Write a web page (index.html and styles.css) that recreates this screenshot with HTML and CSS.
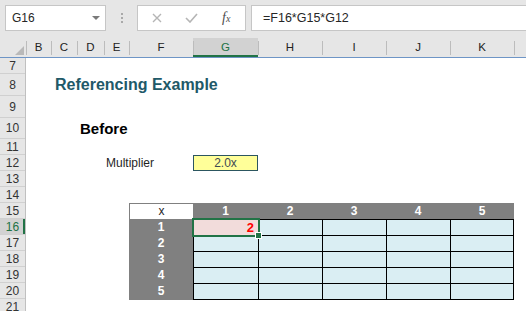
FILE: index.html
```html
<!DOCTYPE html>
<html lang="en">
<head>
    <meta charset="UTF-8">
    <title>Referencing Example</title>
    <link rel="stylesheet" href="styles.css">
</head>
<body>
    <div class="toolbar">
        <div class="namebox">
            <span>G16</span>
            <span class="caret"></span>
        </div>
        <div class="dots"><i></i><i></i><i></i></div>
        <div class="fxbtns">
            <svg class="ico-x" width="10" height="10" viewBox="0 0 10 10">
                <path d="M1 1 L9 9 M9 1 L1 9" stroke="#b5b5b5" stroke-width="1.4" fill="none"/>
            </svg>
            <svg class="ico-ok" width="13" height="10" viewBox="0 0 13 10">
                <path d="M1 5 L5 9 L12 1" stroke="#b5b5b5" stroke-width="1.6" fill="none"/>
            </svg>
            <span class="fx">f<sub>x</sub></span>
        </div>
        <div class="formula">=F16*G15*G12</div>
    </div>

    <div class="colheads">
        <div class="ch corner"><span class="tri"></span></div>
        <div class="ch w25">B</div>
        <div class="ch w26">C</div>
        <div class="ch w27">D</div>
        <div class="ch w25">E</div>
        <div class="ch w64">F</div>
        <div class="ch w65 active">G</div>
        <div class="ch w64">H</div>
        <div class="ch w64">I</div>
        <div class="ch w64">J</div>
        <div class="ch w64">K</div>
        <div class="ch rest"></div>
    </div>

    <div class="sheet">
        <div class="rowheads">
            <div class="rh h16">7</div>
            <div class="rh h22">8</div>
            <div class="rh h22">9</div>
            <div class="rh h21">10</div>
            <div class="rh h16">11</div>
            <div class="rh h16">12</div>
            <div class="rh h16">13</div>
            <div class="rh h16">14</div>
            <div class="rh h16">15</div>
            <div class="rh h16 active">16</div>
            <div class="rh h16">17</div>
            <div class="rh h16">18</div>
            <div class="rh h16">19</div>
            <div class="rh h16">20</div>
            <div class="rh h16">21</div>
        </div>

        <div class="cells">
            <div class="row h16"></div>
            <div class="row h22 title-row"><span class="title">Referencing Example</span></div>
            <div class="row h22"></div>
            <div class="row h21 heading-row"><span class="heading">Before</span></div>
            <div class="row h16"></div>
            <div class="row h16 mult-row">
                <span class="label">Multiplier</span>
                <span class="valuebox">2.0x</span>
            </div>
            <div class="row h16"></div>
            <div class="row h16"></div>

            <div class="xtable">
                <div class="th corner-x">x</div>
                <div class="th">1</div>
                <div class="th">2</div>
                <div class="th">3</div>
                <div class="th">4</div>
                <div class="th">5</div>

                <div class="rl">1</div>
                <div class="td sel">2<span class="handle"></span></div>
                <div class="td"></div>
                <div class="td"></div>
                <div class="td"></div>
                <div class="td last"></div>

                <div class="rl">2</div>
                <div class="td"></div>
                <div class="td"></div>
                <div class="td"></div>
                <div class="td"></div>
                <div class="td last"></div>

                <div class="rl">3</div>
                <div class="td"></div>
                <div class="td"></div>
                <div class="td"></div>
                <div class="td"></div>
                <div class="td last"></div>

                <div class="rl">4</div>
                <div class="td"></div>
                <div class="td"></div>
                <div class="td"></div>
                <div class="td"></div>
                <div class="td last"></div>

                <div class="rl">5</div>
                <div class="td bottom"></div>
                <div class="td bottom"></div>
                <div class="td bottom"></div>
                <div class="td bottom"></div>
                <div class="td bottom last"></div>
            </div>
        </div>
    </div>
</body>
</html>
```

FILE: styles.css
```css
body {
    margin: 0;
    width: 526px;
    height: 311px;
    overflow: hidden;
    background-color: #ffffff;
    font-family: "Liberation Sans", Arial, sans-serif;
    color: #222222;
}

/* formula bar */
.toolbar {
    height: 38px;
    box-sizing: border-box;
    padding-top: 5px;
    background-color: #e6e6e6;
    display: flex;
    align-items: flex-start;
}

.namebox {
    margin-left: 5px;
    width: 101px;
    height: 26px;
    box-sizing: border-box;
    background-color: #ffffff;
    border: 1px solid #c6c6c6;
    display: flex;
    align-items: center;
    justify-content: space-between;
    padding: 0 5px 0 6px;
    font-size: 12px;
    color: #262626;
}

.caret {
    width: 0;
    height: 0;
    border-left: 4px solid transparent;
    border-right: 4px solid transparent;
    border-top: 4px solid #7a7a7a;
}

.dots {
    width: 31px;
    height: 26px;
    display: flex;
    flex-direction: column;
    align-items: center;
    justify-content: center;
    gap: 2px;
}

.dots i {
    width: 2px;
    height: 2px;
    background-color: #a9a9a9;
}

.fxbtns {
    width: 109px;
    height: 26px;
    box-sizing: border-box;
    background-color: #ffffff;
    border: 1px solid #c6c6c6;
    display: flex;
    align-items: center;
    padding-left: 14px;
}

.ico-ok {
    margin-left: 23px;
}

.fx {
    margin-left: 24px;
    font-family: "Liberation Serif", serif;
    font-style: italic;
    font-size: 14px;
    color: #4d4d4d;
    line-height: 1;
}

.fx sub {
    font-size: 10px;
    vertical-align: 0;
}

.formula {
    flex: 1;
    margin-left: 5px;
    height: 26px;
    box-sizing: border-box;
    background-color: #ffffff;
    border: 1px solid #c6c6c6;
    border-right: none;
    padding-left: 11px;
    font-size: 12.5px;
    line-height: 24px;
    color: #262626;
}

/* column headers */
.colheads {
    height: 20px;
    box-sizing: border-box;
    background-color: #e6e6e6;
    border-bottom: 1px solid #6e95c6;
    display: flex;
}

.ch {
    position: relative;
    flex: none;
    font-size: 11.5px;
    line-height: 19px;
    text-align: center;
    color: #222222;
}

.ch::before {
    content: "";
    position: absolute;
    left: 0;
    top: 3px;
    bottom: 2px;
    width: 1px;
    background-color: #bcbcbc;
}

.ch.corner { width: 26px; }
.ch.corner::before { display: none; }
.w25 { width: 25px; }
.w26 { width: 26px; }
.w27 { width: 27px; }
.w64 { width: 64px; }
.w65 { width: 65px; }
.ch.rest { flex: 1; }

.tri {
    position: absolute;
    right: 2px;
    bottom: 2px;
    width: 0;
    height: 0;
    border-left: 9px solid transparent;
    border-bottom: 9px solid #b9b9b9;
}

.ch.active {
    background-color: #d2d2d2;
    color: #217346;
    box-shadow: inset 0 -2px 0 #217346;
}

/* sheet body */
.sheet {
    display: flex;
}

.rowheads {
    width: 26px;
    box-sizing: border-box;
    background-color: #e6e6e6;
    border-right: 1px solid #c0c0c0;
}

.rh {
    box-sizing: border-box;
    border-bottom: 1px solid #d0d0d0;
    font-size: 12px;
    text-align: center;
    color: #333333;
    display: flex;
    align-items: center;
    justify-content: center;
}

.rh.active {
    background-color: #d2d2d2;
    color: #217346;
    box-shadow: inset -2px 0 0 #217346;
}

.h16 { height: 16px; }
.h21 { height: 21px; }
.h22 { height: 22px; }

.cells {
    flex: 1;
}

.row {
    display: flex;
    align-items: center;
}

.title {
    padding-left: 29px;
    font-size: 16px;
    font-weight: bold;
    color: #215968;
}

.heading {
    padding-left: 54px;
    font-size: 15px;
    font-weight: bold;
    color: #000000;
}

.mult-row {
    align-items: stretch;
}

.label {
    width: 167px;
    box-sizing: border-box;
    padding-left: 80px;
    font-size: 12px;
    line-height: 16px;
    color: #1f1f1f;
}

.valuebox {
    width: 65px;
    box-sizing: border-box;
    background-color: #ffff99;
    border: 1px solid #2c5660;
    font-size: 12px;
    line-height: 14px;
    text-align: center;
    color: #3d4a52;
}

/* multiplication table */
.xtable {
    margin-left: 103px;
    display: grid;
    grid-template-columns: 64px 65px 64px 64px 64px 64px;
    grid-template-rows: repeat(5, 16px) 17px;
    font-size: 12px;
}

.th,
.rl {
    background-color: #808080;
    color: #ffffff;
    font-weight: bold;
    text-align: center;
    line-height: 16px;
}

.th.corner-x {
    box-sizing: border-box;
    background-color: #ffffff;
    color: #1f1f1f;
    font-weight: normal;
    border-top: 1px solid #808080;
    border-left: 1px solid #808080;
    line-height: 15px;
}

.td {
    box-sizing: border-box;
    background-color: #daeef3;
    border-top: 1px solid #000000;
    border-left: 1px solid #000000;
}

.td.last {
    border-right: 1px solid #000000;
}

.td.bottom {
    border-bottom: 1px solid #000000;
}

.td.sel {
    position: relative;
    background-color: #f2dcdb;
    color: #ff0000;
    font-weight: bold;
    text-align: right;
    padding-right: 4px;
    font-size: 13px;
    line-height: 15px;
}

.td.sel::after {
    content: "";
    position: absolute;
    left: -2px;
    top: -2px;
    right: -2px;
    bottom: -2px;
    border: 2px solid #217346;
}

.handle {
    position: absolute;
    right: -4px;
    bottom: -4px;
    width: 5px;
    height: 5px;
    background-color: #217346;
    border: 1px solid #ffffff;
    z-index: 1;
}
```
